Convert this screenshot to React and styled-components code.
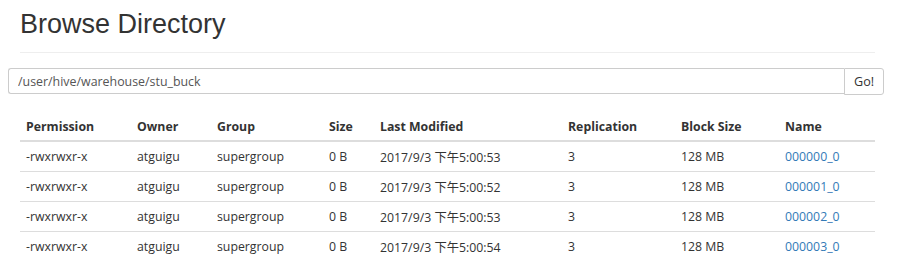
import React from "react";
import styled, { createGlobalStyle } from "styled-components";

const Global = createGlobalStyle`
  html, body { margin: 0; padding: 0; background: #fff; }
  body { font-family: "Open Sans", "Noto Sans CJK SC", sans-serif; color: #333; }
`;

const Page = styled.div`
  padding: 9px 0 20px 0;
`;

const Header = styled.div`
  margin: 0 32px 0 20px;
  border-bottom: 1px solid #eee;
  padding-bottom: 13px;
`;

const Title = styled.h1`
  margin: 0;
  font-family: "Liberation Sans", Arial, sans-serif;
  font-weight: 400;
  font-size: 27px;
  line-height: 30px;
  color: #333;
`;

const SearchRow = styled.form`
  display: flex;
  margin: 15px 23px 0 8px;
  height: 27px;
`;

const PathInput = styled.input`
  flex: 1;
  box-sizing: border-box;
  height: 26px;
  border: 1px solid #ccc;
  border-right: none;
  border-radius: 3px 0 0 3px;
  padding: 0 9px;
  font-family: "Open Sans", sans-serif;
  font-size: 12.4px;
  color: #555;
  outline: none;
`;

const GoButton = styled.button`
  box-sizing: border-box;
  width: 40px;
  height: 27px;
  border: 1px solid #ccc;
  border-radius: 0 3px 3px 0;
  background: #fff;
  font-family: "Open Sans", sans-serif;
  font-size: 12.6px;
  color: #333;
  padding: 0;
`;

const Table = styled.table`
  margin: 17px 0 0 20px;
  width: 855px;
  table-layout: fixed;
  border-collapse: collapse;
  font-size: 12.3px;
`;

const Th = styled.th`
  text-align: left;
  font-weight: 700;
  padding: 1px 6px 0;
  height: 27px;
  border-bottom: 2px solid #ddd;
  white-space: nowrap;
`;

const Td = styled.td`
  padding: 0 6px;
  height: 29px;
  white-space: nowrap;
  border-top: ${(p) => (p.$first ? "none" : "1px solid #ddd")};
  color: #333;
`;

const NameLink = styled.a`
  color: #337ab7;
  text-decoration: none;
`;

const widths = [111, 80, 112, 51, 188, 113, 104, 96];
const headers = ["Permission", "Owner", "Group", "Size", "Last Modified", "Replication", "Block Size", "Name"];
const rows = [
  ["2017/9/3 下午5:00:53", "000000_0"],
  ["2017/9/3 下午5:00:52", "000001_0"],
  ["2017/9/3 下午5:00:53", "000002_0"],
  ["2017/9/3 下午5:00:54", "000003_0"],
];

export default function App() {
  return (
    <Page>
      <Global />
      <Header>
        <Title>Browse Directory</Title>
      </Header>
      <SearchRow onSubmit={(e) => e.preventDefault()}>
        <PathInput defaultValue="/user/hive/warehouse/stu_buck" />
        <GoButton type="submit">Go!</GoButton>
      </SearchRow>
      <Table>
        <colgroup>
          {widths.map((w, i) => (
            <col key={i} style={{ width: w }} />
          ))}
        </colgroup>
        <thead>
          <tr>
            {headers.map((h) => (
              <Th key={h}>{h}</Th>
            ))}
          </tr>
        </thead>
        <tbody>
          {rows.map(([date, name], i) => (
            <tr key={name}>
              <Td $first={i === 0}>-rwxrwxr-x</Td>
              <Td $first={i === 0}>atguigu</Td>
              <Td $first={i === 0}>supergroup</Td>
              <Td $first={i === 0}>0 B</Td>
              <Td $first={i === 0}>{date}</Td>
              <Td $first={i === 0}>3</Td>
              <Td $first={i === 0}>128 MB</Td>
              <Td $first={i === 0}>
                <NameLink href="#">{name}</NameLink>
              </Td>
            </tr>
          ))}
        </tbody>
      </Table>
    </Page>
  );
}
